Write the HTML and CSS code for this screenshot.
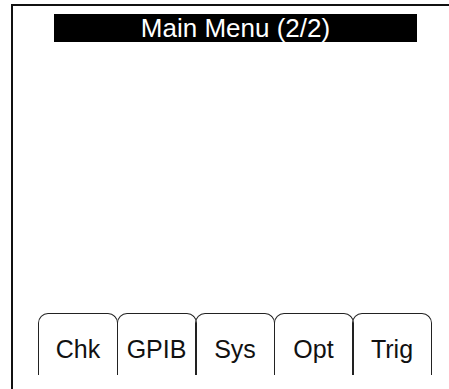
FILE: index.html
```html
<!DOCTYPE html>
<html lang="en">
<head>
    <meta charset="UTF-8">
    <meta name="viewport" content="width=device-width, initial-scale=1.0">
    <title>Main Menu</title>
    <link rel="stylesheet" href="styles.css">
</head>
<body>
    <div class="screen">
        <div class="title">Main Menu (2/2)</div>
        <div class="tabs">
            <div class="tab">Chk</div>
            <div class="tab">GPIB</div>
            <div class="tab">Sys</div>
            <div class="tab">Opt</div>
            <div class="tab">Trig</div>
        </div>
    </div>
</body>
</html>
```

FILE: styles.css
```css
html, body {
    margin: 0;
    height: 100%;
    background-color: white;
    font-family: "Liberation Sans", Arial, sans-serif;
}
body {
    padding: 4px 0 0 11px;
    box-sizing: border-box;
}
.screen {
    height: 100%;
    border-left: 2px solid #111;
    border-top: 2px solid #111;
    box-sizing: border-box;
    display: flex;
    flex-direction: column;
}
.title {
    margin: 8px 0 0 41px;
    width: 363px;
    height: 28px;
    line-height: 28px;
    background-color: black;
    color: white;
    font-size: 26px;
    text-align: center;
}
.tabs {
    display: flex;
    margin: auto 0 14px 25px;
}
.tab {
    width: 80px;
    height: 62px;
    box-sizing: border-box;
    padding-top: 10px;
    display: flex;
    align-items: center;
    justify-content: center;
    border: 1.5px solid #222;
    border-bottom: none;
    border-radius: 10px 10px 0 0;
    font-size: 25px;
    color: #111;
}
.tab + .tab {
    margin-left: -1.5px;
}
```
